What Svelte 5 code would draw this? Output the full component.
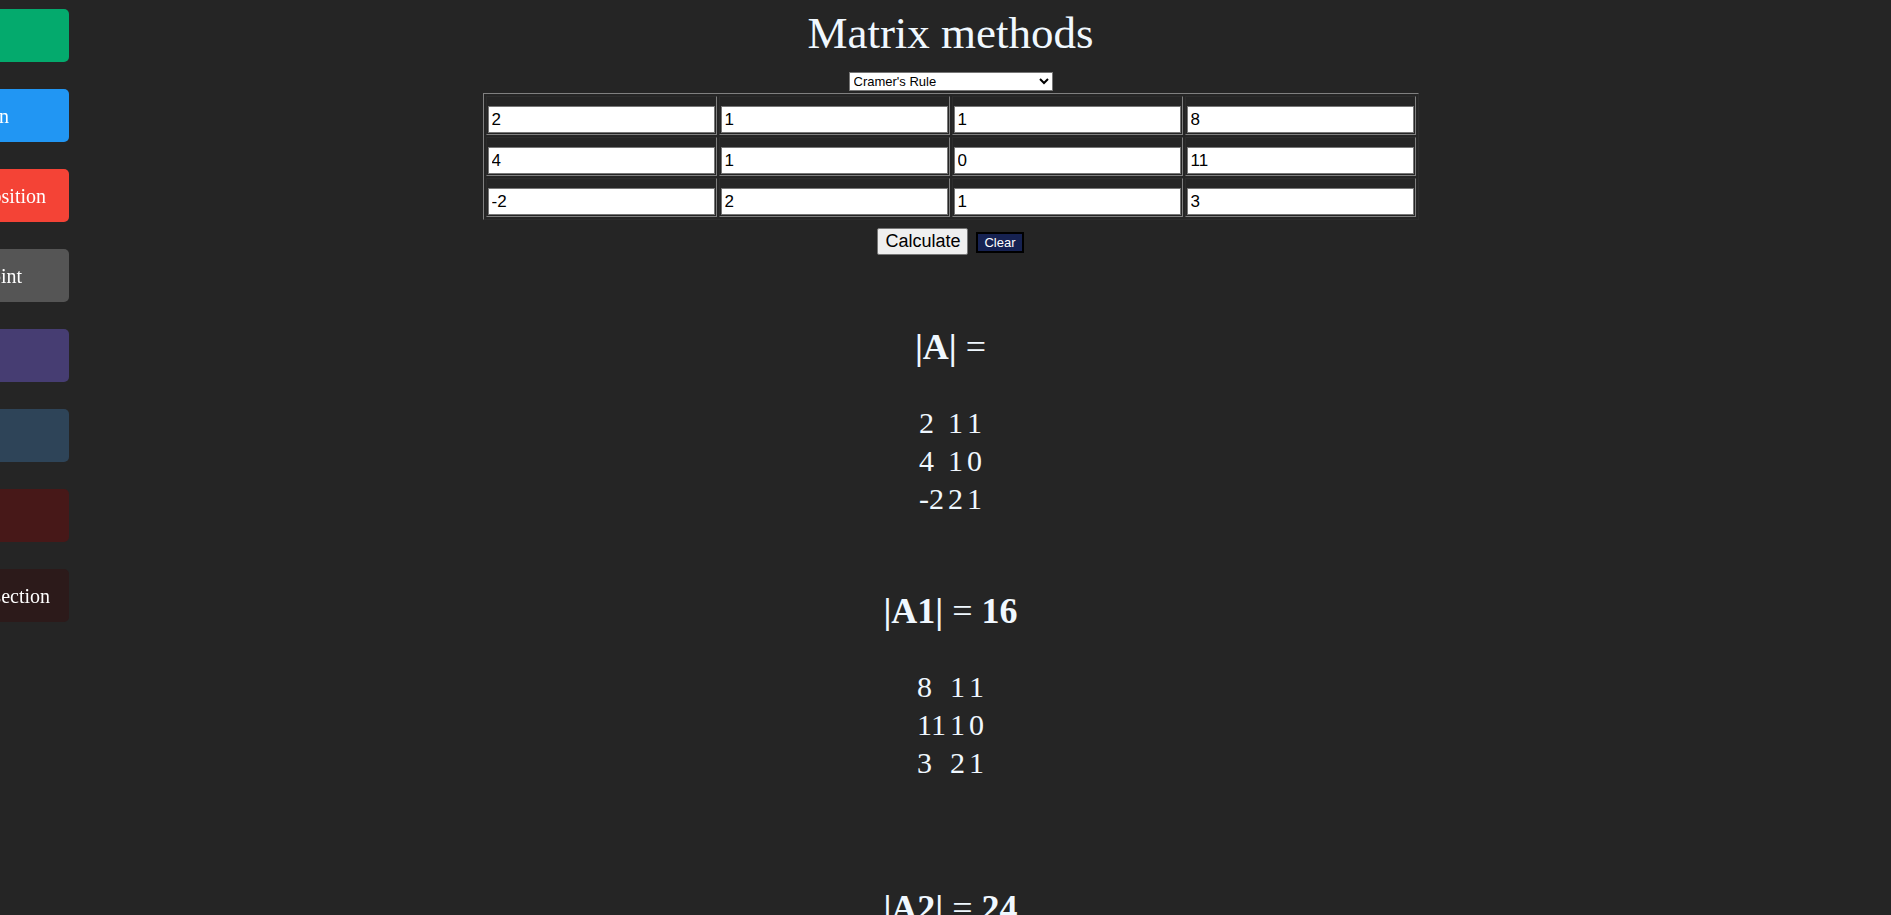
<script>
  const links = [
    { label: '', color: '#04aa6d', inset: 85 },
    { label: 'Elimination', color: '#2196f3', inset: 60 },
    { label: 'Decomposition', color: '#f44336', inset: 23 },
    { label: 'Fixed point', color: '#555555', inset: 47 },
    { label: '', color: '#463d72', inset: 85 },
    { label: '', color: '#2e4458', inset: 85 },
    { label: '', color: '#471818', inset: 85 },
    { label: 'Bisection', color: '#2c1a1a', inset: 19 }
  ];

  const start = [
    [2, 1, 1, 8],
    [4, 1, 0, 11],
    [-2, 2, 1, 3]
  ];

  const results = [
    { name: '|A|', value: '', rows: [[2, 1, 1], [4, 1, 0], [-2, 2, 1]] },
    { name: '|A1|', value: '16', rows: [[8, 1, 1], [11, 1, 0], [3, 2, 1]] },
    { name: '|A2|', value: '24', rows: [] }
  ];

  let cells = $state(start.map((row) => row.map(String)));

  function clear() {
    cells = cells.map((row) => row.map(() => ''));
  }
</script>

<div class="page">
  <nav aria-label="Methods">
    {#each links as link, i}
      <a
        href="#method-{i + 1}"
        aria-label={link.label || `Method ${i + 1}`}
        style="background-color: {link.color}; padding-right: {link.inset}px">{link.label}</a>
    {/each}
  </nav>

  <main>
    <h1>Matrix methods</h1>
    <select aria-label="Method">
      <option>Cramer's Rule</option>
      <option>Gaussian elimination</option>
      <option>LU Decomposition</option>
    </select>

    <table class="grid">
      <tbody>
        {#each cells as row, r}
          <tr>
            {#each row as _, c}
              <td><input type="text" aria-label="Row {r + 1}, column {c + 1}" bind:value={cells[r][c]} /></td>
            {/each}
          </tr>
        {/each}
      </tbody>
    </table>

    <div class="actions">
      <button type="button" class="calculate">Calculate</button>
      <button type="button" class="clear" onclick={clear}>Clear</button>
    </div>

    {#each results as result}
      <section>
        <h2>{result.name} <span class="equals">=</span> {result.value}</h2>
        {#if result.rows.length}
          <table class="matrix">
            <tbody>
              {#each result.rows as row}
                <tr>
                  {#each row as value}
                    <td>{value}</td>
                  {/each}
                </tr>
              {/each}
            </tbody>
          </table>
        {/if}
      </section>
    {/each}
  </main>
</div>

<style>
  :global(body) {
    margin: 0;
    background: #252525;
  }

  .page {
    height: 100vh;
    overflow: hidden;
    color: aliceblue;
    font-family: 'Liberation Serif', 'Times New Roman', serif;
  }

  nav {
    position: fixed;
    top: 9px;
    left: -131px;
    width: 200px;
    display: flex;
    flex-direction: column;
    gap: 27px;
  }

  nav a {
    box-sizing: border-box;
    height: 53px;
    padding: 16px 15px 14px;
    border-radius: 0 5px 5px 0;
    color: white;
    font-size: 20px;
    line-height: 23px;
    text-align: right;
    text-decoration: none;
    white-space: nowrap;
  }

  main {
    display: flex;
    flex-direction: column;
    align-items: center;
    padding: 7px 0 0 10px;
  }

  h1 {
    margin: 0 0 13px;
    font-size: 45px;
    font-weight: 400;
    line-height: 52px;
  }

  select {
    width: 204px;
    height: 19px;
    margin: 0 0 2px;
    border: 1px solid #767676;
    border-radius: 0;
    background-color: white;
    color: black;
    font-family: 'Liberation Sans', Arial, sans-serif;
    font-size: 13px;
  }

  .grid {
    border: 1px solid;
    border-color: #808080 #2c2c2c #2c2c2c #808080;
    border-spacing: 2px;
  }

  .grid td {
    padding: 1px;
    border: 1px solid;
    border-color: #2c2c2c #808080 #808080 #2c2c2c;
  }

  .grid input {
    display: block;
    box-sizing: border-box;
    width: 227px;
    height: 27px;
    margin: 8px 0 0;
    padding: 1px 3px;
    border: 1px solid #767676;
    background: white;
    color: black;
    font-family: 'Liberation Sans', Arial, sans-serif;
    font-size: 17px;
  }

  .actions {
    display: flex;
    align-items: center;
    gap: 8px;
    margin-top: 8px;
  }

  button {
    font-family: 'Liberation Sans', Arial, sans-serif;
  }

  .calculate {
    height: 27px;
    padding: 0 7px;
    border: 1px solid #767676;
    border-radius: 2px;
    background: #efefef;
    color: black;
    font-size: 18px;
  }

  .clear {
    height: 21px;
    margin-top: 2px;
    padding: 0 6px;
    border: 2px solid black;
    background: #162252;
    color: white;
    font-size: 13px;
  }

  section {
    display: flex;
    flex-direction: column;
    align-items: center;
    padding-top: 71px;
  }

  section:last-child {
    padding-top: 104px;
  }

  h2 {
    margin: 0 0 35px;
    font-size: 36px;
    line-height: 42px;
  }

  .equals {
    font-weight: 400;
  }

  .matrix {
    border-spacing: 2px;
    font-size: 30px;
    line-height: 34px;
  }

  .matrix td {
    padding: 1px;
  }
</style>
